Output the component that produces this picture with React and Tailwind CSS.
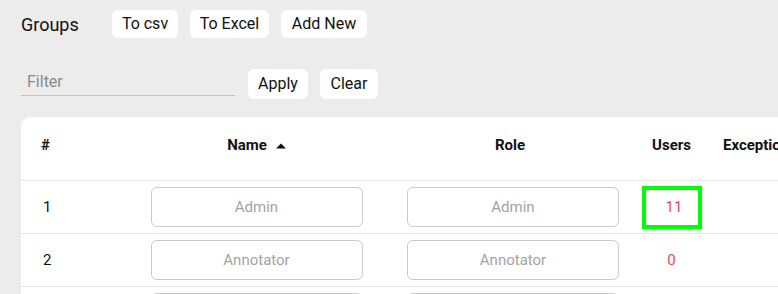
const rows = [
  { id: 1, name: 'Admin', role: 'Admin', users: 11, focused: true },
  { id: 2, name: 'Annotator', role: 'Annotator', users: 0 },
  { id: 3, name: 'Reviewer', role: 'Reviewer', users: 3 },
];

function Btn({ children, className = '' }) {
  return (
    <button className={`bg-white rounded-md text-[16px] text-[#111] leading-none ${className}`}>
      {children}
    </button>
  );
}

function Field({ value }) {
  return (
    <div className="w-[212px] h-[40px] mx-auto rounded-md border border-[#cacaca] flex items-center justify-center text-[15px] text-[#a3a3a3]">
      {value}
    </div>
  );
}

const cols = 'grid grid-cols-[107px_257px_256px_61px_200px]';

export default function App() {
  return (
    <div className="w-[778px] h-[294px] overflow-hidden bg-[#ececec] pl-[21px] text-[#111]" style={{ fontFamily: 'Roboto, "Noto Sans", sans-serif' }}>
      <div className="flex items-center h-[28px] mt-[10px]">
        <h1 className="text-[18px] font-normal w-[91px]">Groups</h1>
        <div className="flex gap-[12px] h-[28px]">
          <Btn className="w-[66px]">To csv</Btn>
          <Btn className="w-[79px]">To Excel</Btn>
          <Btn className="w-[86px]">Add New</Btn>
        </div>
      </div>

      <div className="flex items-start mt-[31px] h-[30px]">
        <div className="w-[214px] h-[27px] border-b border-[#c4c4c4] flex items-center pl-[6px] text-[16px] text-[#8a8a8a]">
          Filter
        </div>
        <div className="flex gap-[12px] h-[30px] ml-[13px]">
          <Btn className="w-[60px]">Apply</Btn>
          <Btn className="w-[58px]">Clear</Btn>
        </div>
      </div>

      <div className="mt-[18px] w-[900px] bg-white rounded-tl-[10px]">
        <div className={`${cols} h-[63px] items-center pb-[6px] text-[15px] font-bold text-[#111]`}>
          <div className="pl-[20px]">#</div>
          <div className="flex items-center justify-center gap-[9px]">
            Name
            <svg width="10" height="6" viewBox="0 0 10 6"><path d="M0 5.5 L5 0.5 L10 5.5 Z" fill="#111" /></svg>
          </div>
          <div className="text-center pr-[6px]">Role</div>
          <div className="text-center">Users</div>
          <div className="pl-[21px]">Exceptions</div>
        </div>
        {rows.map((r) => (
          <div key={r.id} className={`${cols} h-[53px] items-center border-t border-[#e6e6e6] text-[15px]`}>
            <div className="pl-[22px]">{r.id}</div>
            <div><Field value={r.name} /></div>
            <div><Field value={r.role} /></div>
            <div className="h-full flex items-center justify-center">
              <div className={`flex items-center justify-center text-[15px] text-[#f4475b] ${r.focused ? 'w-[60px] h-[43px] border-[4px] border-[#00ff00] pl-[5px]' : ''}`}>
                {r.users}
              </div>
            </div>
            <div />
          </div>
        ))}
      </div>
    </div>
  );
}
